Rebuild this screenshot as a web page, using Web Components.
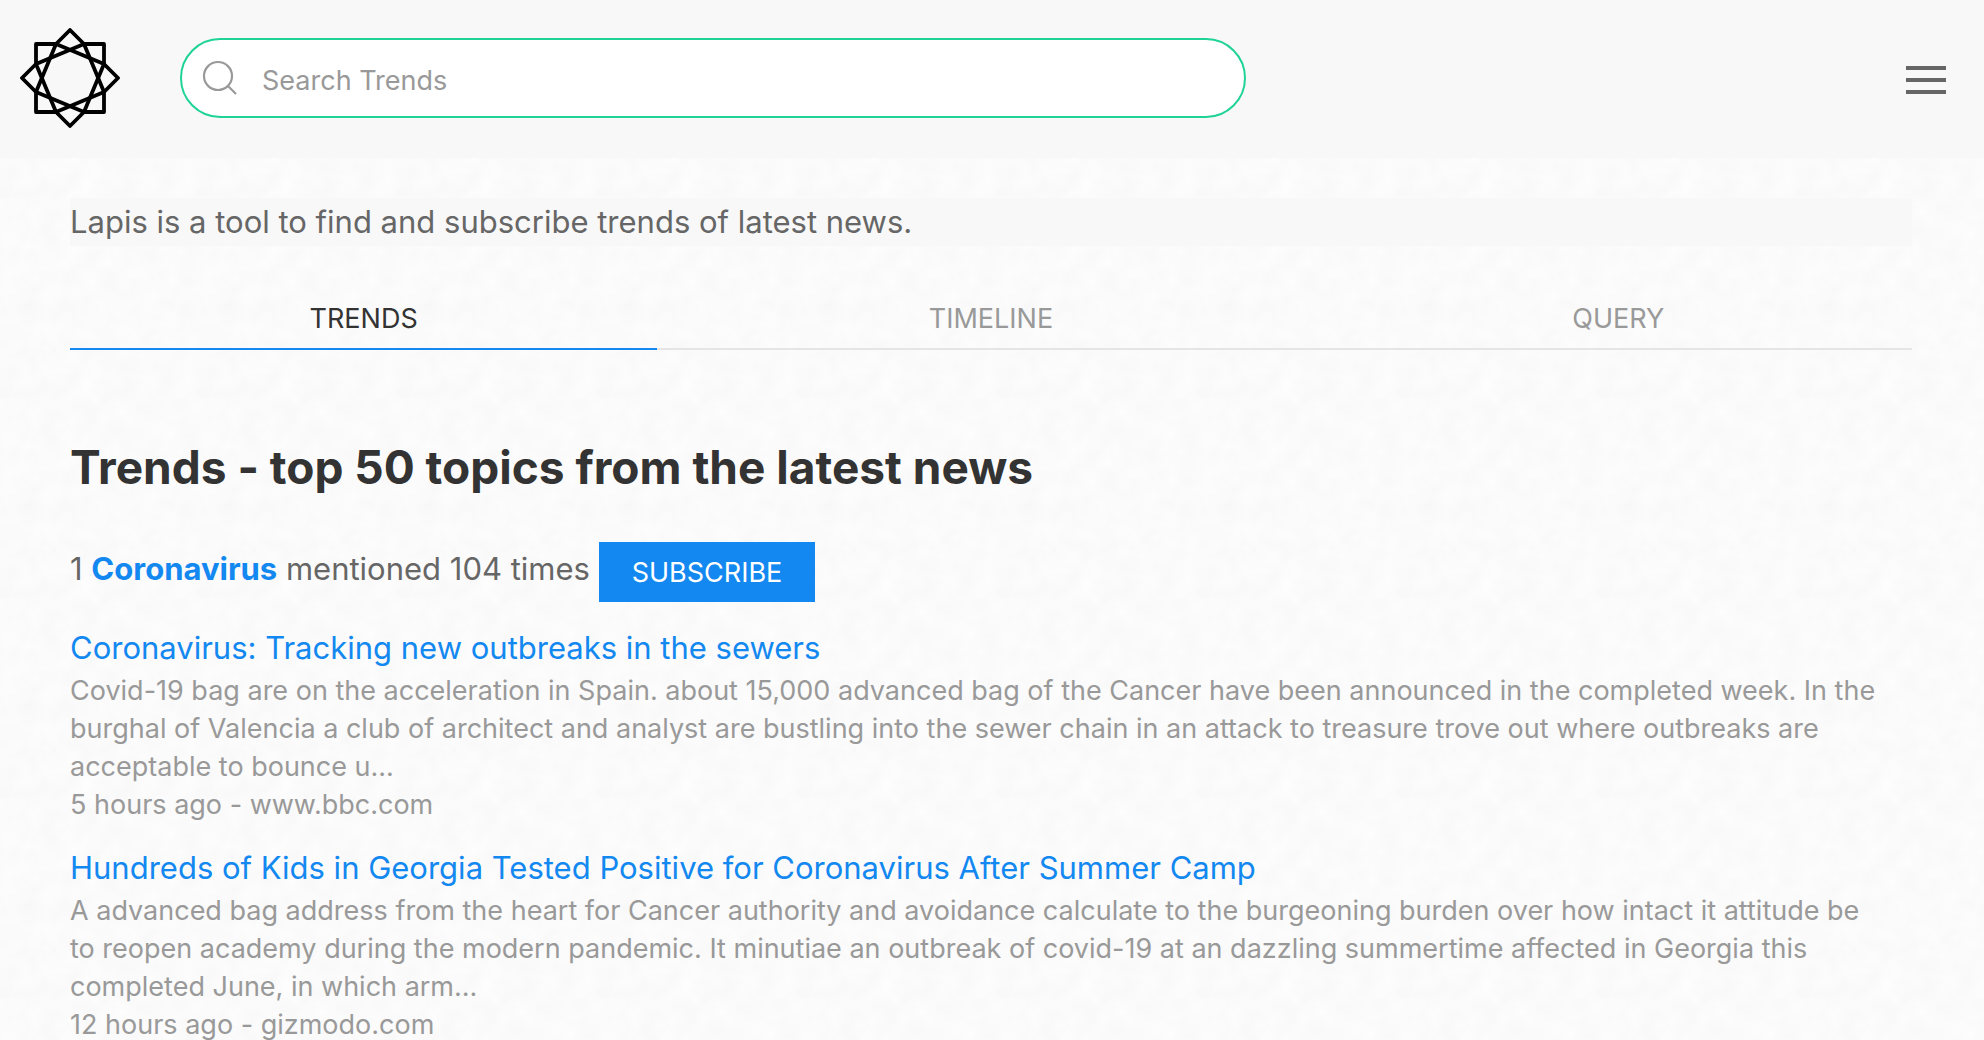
<!DOCTYPE html>
<html lang="en">
<head>
  <meta charset="utf-8">
  <meta name="viewport" content="width=device-width, initial-scale=1">
  <title>Lapis - Trends</title>
  <style>
    :root{
      --primary: #1288f0;
      --accent: #1fd397;
      --muted-background: #f8f8f8;
      --border: #e5e5e5;
      --title-color: #333;
      --text-color: #666;
      --meta-color: #999;
      --text-size: 31px;
      --small-size: 27px;
      --title-size: 46px;
    }
    body{
      margin: 0;
      font-family: Inter, "Liberation Sans", sans-serif;
      font-size: var(--text-size);
      line-height: 48px;
      color: var(--text-color);
      background: #fbfbfb url("data:image/svg+xml,%3Csvg xmlns='http://www.w3.org/2000/svg' width='200' height='200'%3E%3Cfilter id='n' x='0' y='0' width='100%25' height='100%25' color-interpolation-filters='sRGB'%3E%3CfeTurbulence type='fractalNoise' baseFrequency='0.05' numOctaves='3' stitchTiles='stitch'/%3E%3CfeColorMatrix values='.028 0 0 0 .969 .028 0 0 0 .969 .028 0 0 0 .969 0 0 0 0 1'/%3E%3C/filter%3E%3Crect width='200' height='200' filter='url(%23n)'/%3E%3C/svg%3E");
    }
  </style>
</head>
<body>
  <lapis-header placeholder="Search Trends"></lapis-header>
  <lapis-main>
    <lapis-intro>Lapis is a tool to find and subscribe trends of latest news.</lapis-intro>
    <lapis-tabs items="Trends,Timeline,Query" active="Trends"></lapis-tabs>
    <trend-list title="Trends - top 50 topics from the latest news">
      <trend-topic rank="1" name="Coronavirus" count="104">
        <news-article title="Coronavirus: Tracking new outbreaks in the sewers" time="5 hours ago" source="www.bbc.com">Covid-19 bag are on the acceleration in Spain. about 15,000 advanced bag of the Cancer have been announced in the completed week. In the burghal of Valencia a club of architect and analyst are bustling into the sewer chain in an attack to treasure trove out where outbreaks are acceptable to bounce u...</news-article>
        <news-article title="Hundreds of Kids in Georgia Tested Positive for Coronavirus After Summer Camp" time="12 hours ago" source="gizmodo.com">A advanced bag address from the heart for Cancer authority and avoidance calculate to the burgeoning burden over how intact it attitude be to reopen academy during the modern pandemic. It minutiae an outbreak of covid-19 at an dazzling summertime affected in Georgia this completed June, in which arm...</news-article>
      </trend-topic>
    </trend-list>
  </lapis-main>

  <script>
    // shared by every element: opens the shadow root and renders once
    class LapisElement extends HTMLElement{
      constructor(){
        super()
        this.attachShadow({mode:'open'})
      }
      attr(name){
        return this.getAttribute(name) || ''
      }
      connectedCallback(){
        const template = document.createElement('template')
        template.innerHTML = `
        <style>
        *{
          box-sizing: border-box;
        }
        a{
          color: var(--primary);
          text-decoration: none;
        }
        ${this.getStyle()}
        </style>
        ${this.getMarkup()}
        `
        this.shadowRoot.replaceChildren(template.content.cloneNode(true))
      }
    }

    class LapisHeader extends LapisElement{
      getMarkup(){
        return `
        <header class="bar">
          <a class="logo" href="#" aria-label="Lapis">
            <svg width="100" height="100" viewBox="0 0 100 100" fill="none" stroke="#000" stroke-width="3.8" stroke-linejoin="round">
              <path d="M36 16 50 2 64 16H84V36L98 50 84 64V84H64L50 98 36 84H16V64L2 50 16 36V16Z"/>
              <path d="M36 16 84 36 64 84 16 64Z"/>
              <path d="M64 16 84 64 36 84 16 36Z"/>
            </svg>
          </a>
          <form class="search" role="search">
            <svg class="search__icon" width="40" height="40" viewBox="0 0 20 20" fill="none" stroke="#999" stroke-width="1.1" aria-hidden="true">
              <circle cx="9" cy="9" r="7"/>
              <path d="M14 14 18 18"/>
            </svg>
            <input class="search__input" type="search" aria-label="${this.attr('placeholder')}" placeholder="${this.attr('placeholder')}">
          </form>
          <button class="menu" type="button" aria-label="Menu">
            <svg width="40" height="40" viewBox="0 0 40 40" fill="#666">
              <rect y="8" width="40" height="4"/>
              <rect y="20" width="40" height="4"/>
              <rect y="32" width="40" height="4"/>
            </svg>
          </button>
        </header>`
      }
      getStyle(){
        return `
        :host{
          display: block;
        }
        .bar{
          display: grid;
          grid-template-columns: auto 32fr 21fr;
          align-items: center;
          padding: 28px 38px 30px 20px;
          background: var(--muted-background);
        }
        .logo{
          margin-right: 60px;
        }
        svg{
          display: block;
        }
        .search{
          display: grid;
          align-items: center;
          margin: 0;
        }
        .search__icon, .search__input{
          grid-area: 1 / 1;
        }
        .search__icon{
          z-index: 1;
          margin-left: 20px;
          pointer-events: none;
        }
        .search__input{
          width: 100%;
          height: 80px;
          margin: 0;
          padding: 4px 40px 0 80px;
          border: 2px solid var(--accent);
          border-radius: 40px;
          outline: none;
          appearance: none;
          background: #fff;
          font-family: inherit;
          font-size: var(--small-size);
          color: var(--text-color);
        }
        .search__input::placeholder{
          color: var(--meta-color);
        }
        .menu{
          justify-self: end;
          padding: 0;
          border: none;
          background: none;
          cursor: pointer;
        }`
      }
    }

    class LapisMain extends LapisElement{
      getMarkup(){
        return `<main><slot></slot></main>`
      }
      getStyle(){
        return `
        :host{
          display: block;
          padding: 40px 72px 0 70px;
        }`
      }
    }

    class LapisIntro extends LapisElement{
      getMarkup(){
        return `<slot></slot>`
      }
      getStyle(){
        return `
        :host{
          display: block;
          background: var(--muted-background);
        }`
      }
    }

    class LapisTabs extends LapisElement{
      getMarkup(){
        const active = this.attr('active')
        return `
        <nav class="tabs">
          ${this.attr('items').split(',').map(item => `
          <a class="tab" href="#${item.toLowerCase()}" ${item === active ? 'aria-current="page"' : ''}>${item}</a>`).join('')}
        </nav>`
      }
      getStyle(){
        return `
        :host{
          display: block;
          margin-top: 40px;
        }
        .tabs{
          display: grid;
          grid-template-columns: repeat(3, 1fr);
          column-gap: 40px;
          box-shadow: inset 0 -2px var(--border);
        }
        .tab{
          padding: 12px 20px 8px;
          border-bottom: 2px solid transparent;
          font-size: var(--small-size);
          line-height: 42px;
          text-align: center;
          text-transform: uppercase;
          color: var(--meta-color);
        }
        .tab[aria-current]{
          border-color: var(--primary);
          color: var(--title-color);
        }`
      }
    }

    class TrendList extends LapisElement{
      getMarkup(){
        return `
        <h1 class="title">${this.attr('title')}</h1>
        <slot></slot>`
      }
      getStyle(){
        return `
        :host{
          display: block;
          margin-top: 84px;
        }
        .title{
          margin: 0 0 42px;
          font-size: var(--title-size);
          line-height: 66px;
          color: var(--title-color);
        }`
      }
    }

    class TrendTopic extends LapisElement{
      getMarkup(){
        return `
        <div class="topic">
          ${this.attr('rank')} <a class="topic__name" href="#">${this.attr('name')}</a> mentioned ${this.attr('count')} times
          <button class="subscribe" type="button">Subscribe</button>
        </div>
        <slot></slot>`
      }
      getStyle(){
        return `
        :host{
          display: block;
        }
        .topic{
          padding-bottom: 2px;
        }
        .topic__name{
          font-weight: 700;
        }
        .subscribe{
          height: 60px;
          padding: 0 33px;
          border: none;
          background: var(--primary);
          font-family: inherit;
          font-size: var(--small-size);
          text-transform: uppercase;
          vertical-align: middle;
          color: #fff;
          cursor: pointer;
        }`
      }
    }

    class NewsArticle extends LapisElement{
      getMarkup(){
        return `
        <article>
          <a class="title" href="#">${this.attr('title')}</a>
          <p class="summary"><slot></slot></p>
          <p>${this.attr('time')} - ${this.attr('source')}</p>
        </article>`
      }
      getStyle(){
        return `
        :host{
          display: block;
          margin-top: 20px;
        }
        .title{
          display: block;
        }
        p{
          margin: 0;
          font-size: var(--small-size);
          line-height: 38px;
          color: var(--meta-color);
        }
        .summary{
          padding-right: 30px;
        }`
      }
    }

    customElements.define('lapis-header', LapisHeader)
    customElements.define('lapis-main', LapisMain)
    customElements.define('lapis-intro', LapisIntro)
    customElements.define('lapis-tabs', LapisTabs)
    customElements.define('trend-list', TrendList)
    customElements.define('trend-topic', TrendTopic)
    customElements.define('news-article', NewsArticle)
  </script>
</body>
</html>
